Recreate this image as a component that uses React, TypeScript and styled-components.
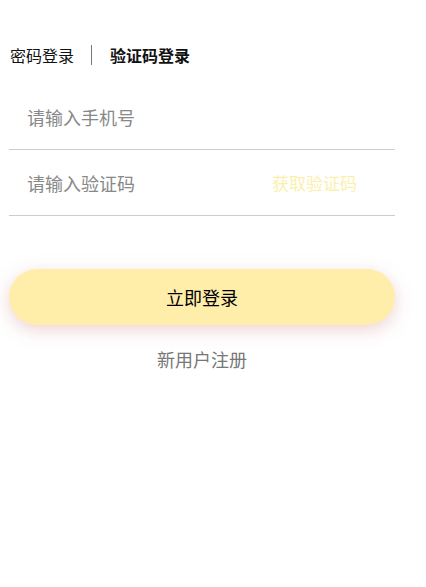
import React from "react";
import styled, { createGlobalStyle } from "styled-components";

const GlobalStyle = createGlobalStyle`
  html, body {
    margin: 0;
    padding: 0;
    background: #fff;
  }
  body {
    font-family: "Noto Sans CJK SC", "Noto Sans", sans-serif;
  }
`;

const Page = styled.div`
  width: 386px;
  margin-left: 9px;
  padding-top: 45px;
  display: flex;
  flex-direction: column;
`;

const Tabs = styled.div`
  display: flex;
  align-items: center;
  height: 20px;
  margin-bottom: 19px;
`;

const Tab = styled.span<{ active?: boolean }>`
  font-size: 16px;
  line-height: 20px;
  color: #111;
  font-weight: ${({ active }) => (active ? 700 : 400)};
  padding-left: 1px;
`;

const Divider = styled.span`
  width: 1px;
  height: 20px;
  background: #777;
  margin: 0 17px 0 17px;
`;

const Field = styled.label`
  display: flex;
  align-items: center;
  height: 65px;
  border-bottom: 1px solid #cccccc;
  padding: 0 38px 0 18px;
`;

const Input = styled.input`
  flex: 1;
  min-width: 0;
  border: none;
  outline: none;
  padding: 0;
  font-family: inherit;
  font-size: 18px;
  color: #333;
  background: transparent;
  &::placeholder {
    color: #888;
  }
`;

const CodeButton = styled.button`
  border: none;
  background: none;
  padding: 0;
  font-family: inherit;
  font-size: 17px;
  color: #fcefad;
  cursor: pointer;
`;

const Submit = styled.button`
  margin-top: 53px;
  height: 56px;
  border: none;
  border-radius: 28px;
  background: #ffeeaa;
  box-shadow: 0 5px 18px rgba(205, 130, 130, 0.35);
  font-family: inherit;
  font-size: 18px;
  color: #000;
  cursor: pointer;
`;

const Register = styled.a`
  margin-top: 24px;
  align-self: center;
  font-size: 18px;
  line-height: 20px;
  color: #777;
  text-decoration: none;
`;

export default function App() {
  return (
    <>
      <GlobalStyle />
      <Page>
        <Tabs>
          <Tab>密码登录</Tab>
          <Divider />
          <Tab active>验证码登录</Tab>
        </Tabs>
        <Field>
          <Input placeholder="请输入手机号" />
        </Field>
        <Field>
          <Input placeholder="请输入验证码" />
          <CodeButton type="button">获取验证码</CodeButton>
        </Field>
        <Submit type="button">立即登录</Submit>
        <Register href="#">新用户注册</Register>
      </Page>
    </>
  );
}
